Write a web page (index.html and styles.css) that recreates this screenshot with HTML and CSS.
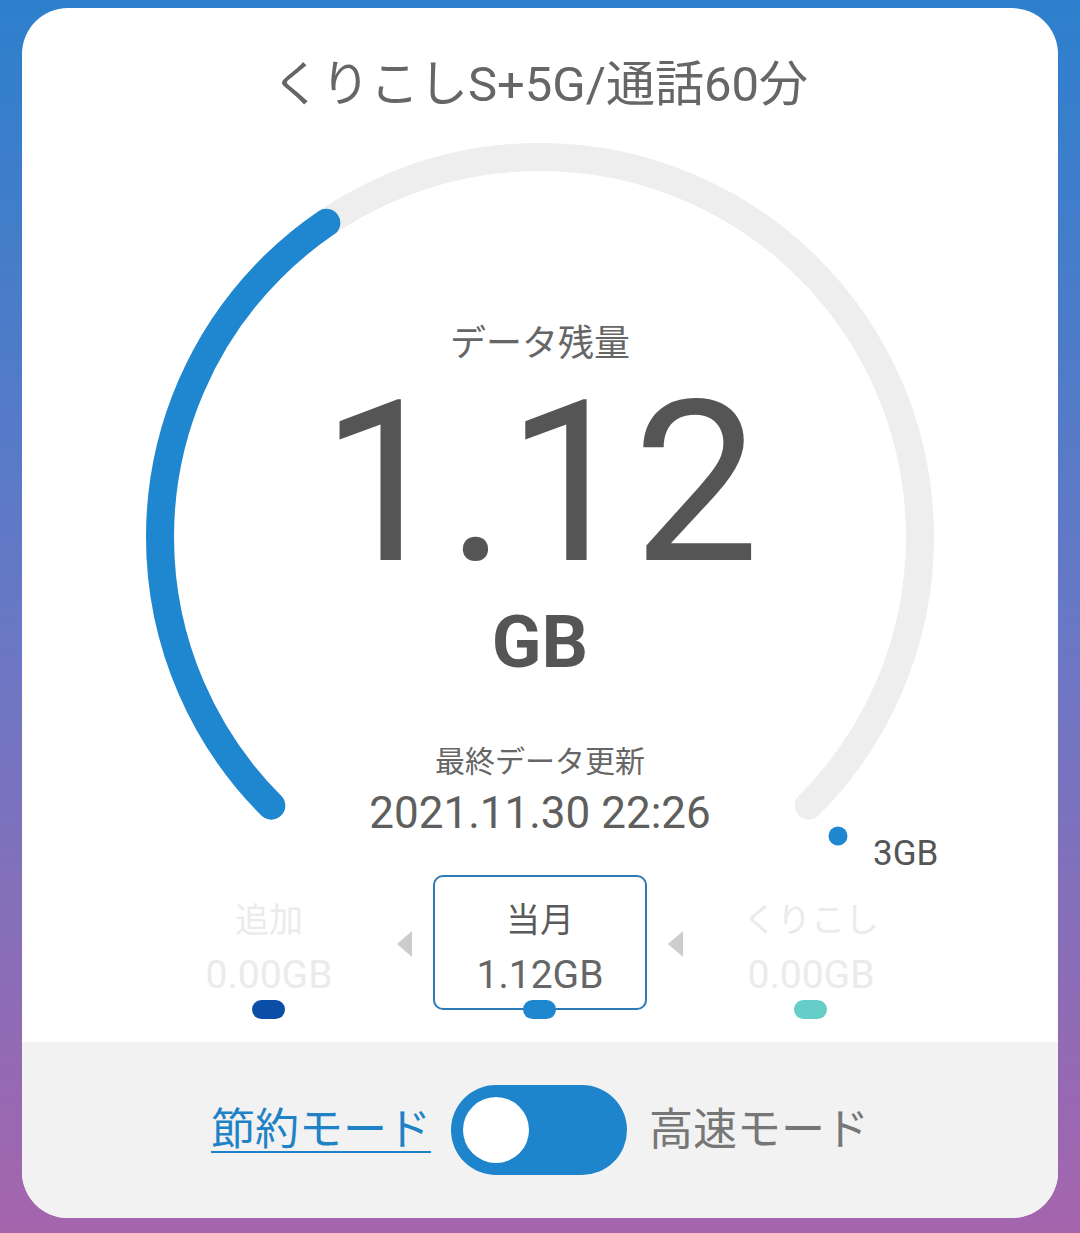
FILE: index.html
```html
<!DOCTYPE html>
<html lang="ja">

<head>
    <meta charset="UTF-8">
    <meta name="viewport" content="width=device-width, initial-scale=1.0">
    <title>データ残量</title>
    <link rel="stylesheet" href="styles.css">
</head>

<body>
    <div class="plan_card">
        <h1 class="plan_title">くりこしS+5G/通話60分</h1>

        <!-- メーター -->
        <div class="meter_box">
            <svg class="meter_arc" width="1036" height="760" viewBox="0 0 1036 760">
                <path d="M249.3 690.7 A380 380 0 1 1 786.7 690.7" fill="none" stroke="#eeeeee" stroke-width="28" stroke-linecap="round" />
                <path d="M249.3 690.7 A380 380 0 1 1 786.7 690.7" fill="none" stroke="#1f87cf" stroke-width="28" stroke-linecap="round" pathLength="100" stroke-dasharray="37.33 200" />
                <circle cx="816" cy="721" r="9.5" fill="#1f87cf" />
            </svg>
            <span class="meter_max">3GB</span>
            <div class="meter_text">
                <p class="meter_label">データ残量</p>
                <p class="meter_value">1.12</p>
                <p class="meter_unit">GB</p>
                <p class="meter_update">最終データ更新</p>
                <p class="meter_date">2021.11.30 22:26</p>
            </div>
        </div>

        <!-- 内訳 -->
        <div class="usage_row">
            <div class="usage_item">
                <p class="usage_name">追加</p>
                <p class="usage_num">0.00GB</p>
                <i class="usage_pill pill_add"></i>
            </div>
            <div class="usage_arrow"><i></i></div>
            <div class="usage_item usage_active">
                <p class="usage_name">当月</p>
                <p class="usage_num">1.12GB</p>
                <i class="usage_pill pill_month"></i>
            </div>
            <div class="usage_arrow"><i></i></div>
            <div class="usage_item">
                <p class="usage_name">くりこし</p>
                <p class="usage_num">0.00GB</p>
                <i class="usage_pill pill_carry"></i>
            </div>
        </div>

        <!-- モード切替 -->
        <div class="mode_bar">
            <a href="" class="mode_save">節約モード</a>
            <div class="mode_switch"><span></span></div>
            <span class="mode_fast">高速モード</span>
        </div>
    </div>
</body>

</html>
```

FILE: styles.css
```css
* {
    padding: 0;
    margin: 0;
    box-sizing: border-box;
    list-style: none;
}

body {
    width: 1080px;
    height: 1233px;
    padding: 8px 22px 0;
    background: linear-gradient(180deg, #2d80cd 0%, #6878c5 50%, #a565ad 100%);
    font-family: Roboto, "Noto Sans CJK JP", sans-serif;
    color: #666666;
    overflow: hidden;
}

.plan_card {
    height: 1210px;
    background: #FFFFFF;
    border-radius: 46px;
    overflow: hidden;
    display: flex;
    flex-direction: column;
}

.plan_title {
    padding-top: 47px;
    height: 107px;
    font-size: 49px;
    line-height: 60px;
    font-weight: 400;
    text-align: center;
    color: #666666;
}

/* メーター */
.meter_box {
    position: relative;
    height: 760px;
}

.meter_arc {
    position: absolute;
    top: 0;
    left: 0;
}

.meter_max {
    position: absolute;
    left: 851px;
    top: 721px;
    font-size: 35px;
    line-height: 1;
    color: #555555;
}

.meter_text {
    position: relative;
    padding-top: 205px;
    display: flex;
    flex-direction: column;
    align-items: center;
    text-align: center;
}

.meter_label {
    font-size: 36px;
    line-height: 48px;
    color: #666666;
}

.meter_value {
    margin-top: 25px;
    font-size: 225px;
    line-height: 180px;
    color: #555555;
}

.meter_unit {
    margin-top: 40px;
    font-size: 73px;
    line-height: 58px;
    font-weight: 700;
    color: #555555;
}

.meter_update {
    margin-top: 71px;
    font-size: 30px;
    line-height: 40px;
    color: #666666;
}

.meter_date {
    margin-top: 9px;
    font-size: 44px;
    line-height: 1;
    color: #5e5e5e;
}

/* 内訳 */
.usage_row {
    height: 167px;
    display: flex;
    justify-content: center;
    align-items: flex-start;
}

.usage_item {
    position: relative;
    width: 214px;
    height: 135px;
    padding-top: 21px;
    border: 2px solid transparent;
    border-radius: 10px;
    text-align: center;
    color: #ebebeb;
}

.usage_active {
    border-color: #2c7ab6;
    color: #5a5a5a;
}

.usage_name {
    font-size: 34px;
    line-height: 44px;
}

.usage_num {
    margin-top: 11px;
    font-size: 39px;
    line-height: 44px;
}

.usage_active .usage_num {
    color: #666666;
}

.usage_pill {
    position: absolute;
    left: 50%;
    bottom: -11px;
    width: 33px;
    height: 19px;
    margin-left: -17px;
    border-radius: 10px;
}

.pill_add {
    background: #0b4ea8;
}

.pill_month {
    background: #1f87cf;
}

.pill_carry {
    background: #66cdc9;
}

.usage_arrow {
    width: 57px;
    height: 135px;
    display: flex;
    justify-content: center;
    align-items: center;
}

.usage_arrow>i {
    margin-top: 2px;
    width: 0;
    height: 0;
    border-top: 13px solid transparent;
    border-bottom: 13px solid transparent;
    border-right: 15px solid #cccccc;
}

/* モード切替 */
.mode_bar {
    height: 176px;
    background: #f2f2f2;
    display: flex;
    justify-content: center;
    align-items: center;
}

.mode_save {
    font-size: 44px;
    line-height: 60px;
    color: #1f82c6;
    text-decoration: underline;
    text-decoration-thickness: 2px;
    text-underline-offset: 6px;
}

.mode_switch {
    margin: 0 22px 0 20px;
    width: 176px;
    height: 90px;
    padding: 12px;
    border-radius: 45px;
    background: #1e84cc;
}

.mode_switch>span {
    display: block;
    width: 66px;
    height: 66px;
    border-radius: 50%;
    background: #FFFFFF;
}

.mode_fast {
    font-size: 44px;
    line-height: 60px;
    color: #777777;
}
```
